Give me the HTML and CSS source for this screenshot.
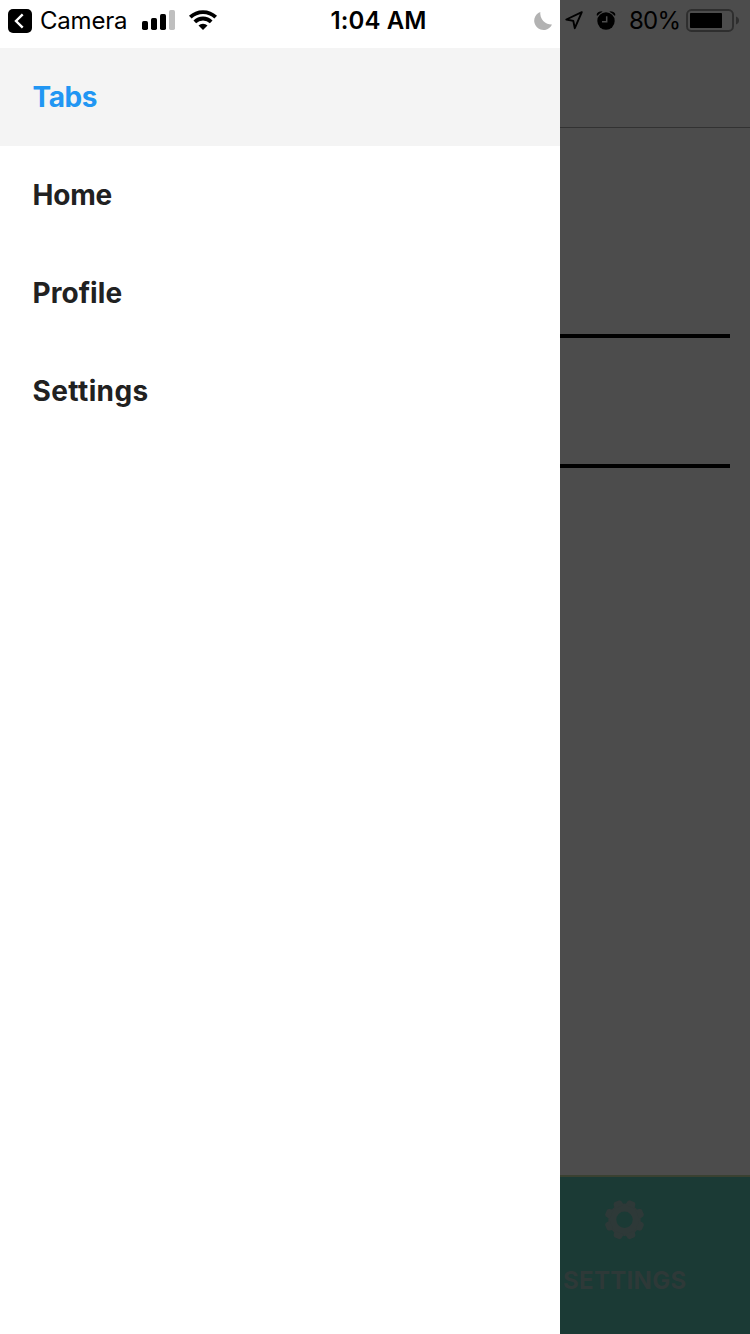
FILE: index.html
```html
<!DOCTYPE html>
<html lang="en">
<head>
<meta charset="utf-8">
<title>Tabs</title>
<link rel="stylesheet" href="styles.css">
</head>
<body>
<div class="screen">
  <nav class="drawer">
    <a class="drawer-item active"><span class="w-tabs">Tabs</span></a>
    <a class="drawer-item"><span class="w-home">Home</span></a>
    <a class="drawer-item"><span class="w-profile">Profile</span></a>
    <a class="drawer-item"><span class="w-settings">Settings</span></a>
  </nav>
  <main class="page">
    <header class="page-header"></header>
    <section class="form">
      <div class="field field-first"></div>
      <div class="field"></div>
    </section>
    <footer class="tabbar">
      <svg class="gear" width="40" height="40" viewBox="-20.5 -19.7 40 40">
        <defs>
          <mask id="hole"><rect x="-21" y="-21" width="42" height="42" fill="#fff"/><circle r="8.2" fill="#000"/></mask>
          <path id="teeth" d="M-5 -14L-4.2 -18.6L-2.6 -20H2.6L4.2 -18.6L5 -14ZM-5 14L-4.2 18.6L-2.6 20H2.6L4.2 18.6L5 14Z"/>
        </defs>
        <g fill="#2e3938" mask="url(#hole)">
          <circle r="16.2"/>
          <use href="#teeth" transform="rotate(22.5)"/>
          <use href="#teeth" transform="rotate(67.5)"/>
          <use href="#teeth" transform="rotate(112.5)"/>
          <use href="#teeth" transform="rotate(157.5)"/>
        </g>
      </svg>
      <span class="tab-label">SETTINGS</span>
    </footer>
  </main>
  <div class="status">
    <div class="status-left">
      <svg width="24" height="24" viewBox="0 0 24 24"><rect width="24" height="24" rx="5"/><path d="M14.7 5.3L8 12l6.7 6.7" fill="none" stroke="#fff" stroke-width="2.4"/></svg>
      <span class="camera">Camera</span>
      <svg class="signal" width="33" height="20" viewBox="0 0 33 20"><rect y="11" width="6" height="9" rx="1.7"/><rect x="9" y="8" width="6" height="12" rx="1.7"/><rect x="18" y="4" width="6" height="16" rx="1.7"/><rect x="27" width="6" height="20" rx="1.7" fill="#bfbfbf"/></svg>
      <svg class="wifi" width="28" height="20" viewBox="0 0 28 20"><g fill="none" stroke="#000" stroke-width="3.8"><path d="M1.3 7.2a18.2 18.2 0 0 1 25.4 0"/><path d="M5.8 11.8a11.8 11.8 0 0 1 16.4 0"/></g><path d="M9.5 15.6a6.5 6.5 0 0 1 9 0L14 20z"/></svg>
    </div>
    <span class="time">1:04 AM</span>
    <div class="status-right">
      <svg class="moon" width="18" height="18" viewBox="0 0 18 18"><path d="M6.3 0A11.2 11.2 0 0 0 18 12.5A9.3 9.3 0 1 1 6.3 0Z" fill="#b2b2b2"/></svg>
      <svg class="location" width="18" height="19" viewBox="0 0 18 19"><path d="M16.8 1.2L1.3 8.5L8.3 9.9L9.8 17.2Z" fill="none" stroke="#000" stroke-width="1.9" stroke-linejoin="round"/></svg>
      <svg class="alarm" width="20" height="19" viewBox="0 0 20 19"><circle cx="10" cy="10" r="8.7"/><path d="M.6 4.2Q.6 .3 6.6 .3L5.8 1.3Q3.2 2.3 1.5 4.8ZM19.4 4.2Q19.4 .3 13.4 .3L14.2 1.3Q16.8 2.3 18.5 4.8Z"/><path d="M10.7 5.2V10.8H6" fill="none" stroke="#4c4c4c" stroke-width="1.5"/></svg>
      <span class="percent">80%</span>
      <svg class="battery" width="53" height="24" viewBox="0 0 53 24"><rect x="1" y="1" width="46" height="21" rx="4.5" fill="none" stroke="#2e2e2e" stroke-width="1.9"/><rect x="4" y="4" width="32" height="15" rx=".7"/><path d="M50 7.5Q53 8.7 53 11.5T50 15.5Z" fill="#2e2e2e"/></svg>
    </div>
  </div>
</div>
</body>
</html>
```
FILE: styles.css
```css
* { box-sizing: border-box; }
body { margin: 0; font-family: Inter, "Liberation Sans", sans-serif; color: #000; }
svg { display: block; flex: none; overflow: visible; }
.screen { position: relative; display: grid; grid-template-columns: 560px 190px; width: 750px; height: 1334px; overflow: hidden; }
.drawer { background: #fff; padding-top: 48px; }
.drawer-item { display: flex; align-items: center; height: 98px; padding: 0 0 0 32.5px; color: #212121; font-size: 28px; line-height: 34px; font-weight: 650; white-space: nowrap; }
.drawer-item.active { background: #f4f4f4; color: #2196f3; }
.w-tabs { letter-spacing: -.4px; }
.w-home { letter-spacing: -.2px; }
.w-profile { letter-spacing: .05px; }
.w-settings { letter-spacing: .4px; }
.page { display: flex; flex-direction: column; background: #4c4c4c; min-width: 0; }
.page-header { height: 128px; border-bottom: 1px solid #323232; }
.form { flex: 1; padding-right: 20px; }
.field { height: 130px; border-bottom: 4px solid #000; }
.field-first { height: 210px; }
.tabbar { height: 159px; border-top: 2px solid #3a4131; background: #1b3a35; padding-top: 23px; display: flex; flex-direction: column; }
.gear { margin-left: 44px; }
.tab-label { margin: 27px 0 0 3px; color: #2e3938; font-size: 24px; line-height: 28px; font-weight: 650; white-space: nowrap; letter-spacing: .3px; }
.status { position: absolute; top: 0; left: 0; width: 750px; height: 41px; display: grid; grid-template-columns: 330px 203px 217px; align-items: center; font-size: 24px; line-height: 31px; white-space: nowrap; }
.status-left, .status-right { display: flex; align-items: center; }
.status-left { padding-left: 8px; }
.camera { width: 87px; margin-left: 8px; letter-spacing: -.2px; }
.signal { margin: -1px 0 0 15px; }
.wifi { margin: -1px 0 0 14px; }
.time { padding-left: .5px; font-weight: 600; letter-spacing: .1px; }
.moon { margin-left: 1px; }
.location { margin-left: 13px; }
.alarm { margin: -1px 0 0 13px; }
.percent { width: 50px; margin-left: 13px; letter-spacing: -.8px; }
.battery { margin-left: 7px; }
```
